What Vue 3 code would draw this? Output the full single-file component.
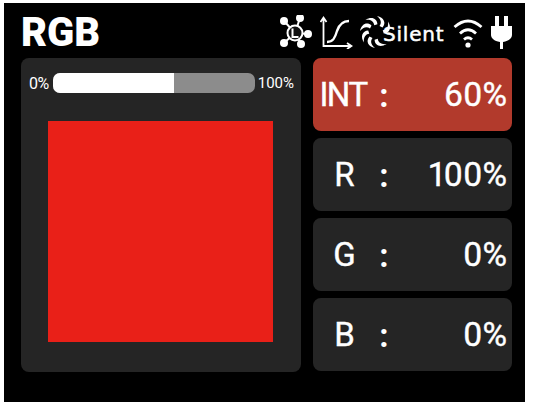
<script setup>
const rows = [
  { name: "INT", value: "60%", active: true },
  { name: "R", value: "100%" },
  { name: "G", value: "0%" },
  { name: "B", value: "0%" },
];
// the blade pointing right sits under the S of the label, so it is left out
const fanBlades = [0, 45, 135, 180, 225, 270, 315];
const nodes = [
  [4, 6],
  [20, 3],
  [28, 19],
  [21, 29],
  [4, 28],
];
</script>

<template>
  <div class="screen">
    <header class="top">
      <div class="title">RGB</div>
      <div class="status">
        <svg class="ic-net" width="33" height="34" viewBox="0 0 33 34">
          <line v-for="(n, i) in nodes" :key="i" x1="15" y1="18" :x2="n[0]" :y2="n[1]" stroke="#fff" stroke-width="2" />
          <circle v-for="(n, i) in nodes" :key="'c' + i" :cx="n[0]" :cy="n[1]" r="4" fill="#fff" />
          <circle cx="15" cy="18" r="7.5" fill="#111" stroke="#fff" stroke-width="2" />
          <path d="M12.500 13.500v8.500h6" fill="none" stroke="#fff" stroke-width="2" />
        </svg>
        <svg class="ic-curve" width="33" height="34" viewBox="0 0 33 34">
          <path d="M3.500 3v28h28M0.500 7 3.500 2.500 6.500 7M27 28l4.500 3-4.500 3" fill="none" stroke="#fff" stroke-width="1.800" />
          <path d="M7 27c6 0 8-4 10-11 2-6 6-10 12-10" fill="none" stroke="#fff" stroke-width="2.400" />
        </svg>
        <svg class="ic-fan" width="32" height="34" viewBox="-16 -17 32 34">
          <path
            v-for="a in fanBlades"
            :key="a"
            d="M3.500-6C6-9 5-13 1-16 8-14.500 10.500-9 6.500-4.500Z"
            fill="#fff"
            :transform="`rotate(${a})`"
          />
        </svg>
        <span class="mode">Silent</span>
        <svg class="ic-wifi" width="32" height="32" viewBox="0 0 32 32">
          <path d="M2.500 11Q16-1 29.500 11M8 17.500Q16 10 24 17.500M12 23.500Q16 20 20 23.500" fill="none" stroke="#fff" stroke-width="2.800" />
          <circle cx="16" cy="29" r="2.600" fill="#fff" />
        </svg>
        <svg class="ic-plug" width="21" height="33" viewBox="0 0 21 33">
          <path d="M4 0h4v10h5V0h4v10h4v9c0 3-3 6-9 7v7H9v-7C3 25 0 22 0 19v-9h4z" fill="#fff" />
        </svg>
      </div>
    </header>

    <main class="body">
      <section class="panel">
        <div class="slider">
          <span class="zero">0%</span>
          <div class="track">
            <div class="fill" :style="{ width: '60%' }"></div>
          </div>
          <span>100%</span>
        </div>
        <div class="swatch"></div>
      </section>

      <section class="rows">
        <div v-for="row in rows" :key="row.name" class="row" :class="{ active: row.active }">
          <span class="name">{{ row.name }}</span>
          <span class="colon">:</span>
          <span class="value">{{ row.value }}</span>
        </div>
      </section>
    </main>
  </div>
</template>

<style scoped>
.screen {
  width: 521px;
  height: 399px;
  margin: 3px 0 0 4px;
  background: #000;
  color: #fff;
  font-family: Roboto, "Liberation Sans", sans-serif;
  box-sizing: border-box;
  padding: 9px 13px 0 17px;
}
.top {
  display: flex;
  justify-content: space-between;
  align-items: center;
  height: 46px;
}
.title {
  font-size: 40px;
  font-weight: 900;
  line-height: 1;
  margin-top: -4px;
}
.status {
  display: flex;
  align-items: center;
  margin-top: -6px;
}
.ic-curve {
  margin-left: 7px;
}
.ic-fan {
  margin-left: 7px;
}
.mode {
  font-family: "DejaVu Sans", sans-serif;
  font-size: 20px;
  letter-spacing: 0.8px;
  -webkit-text-stroke: 0.5px #fff;
  margin-left: -9px;
  margin-top: 4px;
  width: 69px;
}
.ic-plug {
  margin-left: 7px;
}
.body {
  display: flex;
  gap: 12px;
}
.panel {
  width: 280px;
  height: 314px;
  background: #252525;
  border-radius: 8px;
  box-sizing: border-box;
  padding: 15px 7px 0 8px;
}
.slider {
  display: flex;
  align-items: center;
  justify-content: space-between;
  font-size: 15px;
  height: 20px;
}
.zero {
  font-size: 16px;
  letter-spacing: -0.5px;
}
.track {
  width: 202px;
  height: 20px;
  margin-left: 1px;
  background: #8c8c8c;
  border-radius: 7px;
  overflow: hidden;
}
.fill {
  height: 100%;
  background: #fff;
}
.swatch {
  width: 225px;
  height: 221px;
  margin: 28px 0 0 19px;
  background: #e92018;
}
.rows {
  width: 199px;
  display: flex;
  flex-direction: column;
  gap: 7px;
}
.row {
  height: 73px;
  background: #252525;
  border-radius: 8px;
  display: grid;
  grid-template-columns: 60px 22px 1fr;
  align-items: center;
  font-size: 33px;
  padding: 0 5px 0 0;
}
.row.active {
  background: #b23a2c;
}
.name {
  text-align: center;
  padding-left: 3px;
  -webkit-text-stroke: 0.4px #fff;
}
.active .name {
  padding-left: 0;
  letter-spacing: -1.5px;
}
.colon {
  text-align: center;
  font-weight: 700;
  margin-top: 2px;
}
.value {
  text-align: right;
  font-size: 33.5px;
  font-variant-numeric: proportional-nums;
  -webkit-text-stroke: 0.4px #fff;
}
</style>

<style>
html,
body {
  background: #fff;
}
</style>
